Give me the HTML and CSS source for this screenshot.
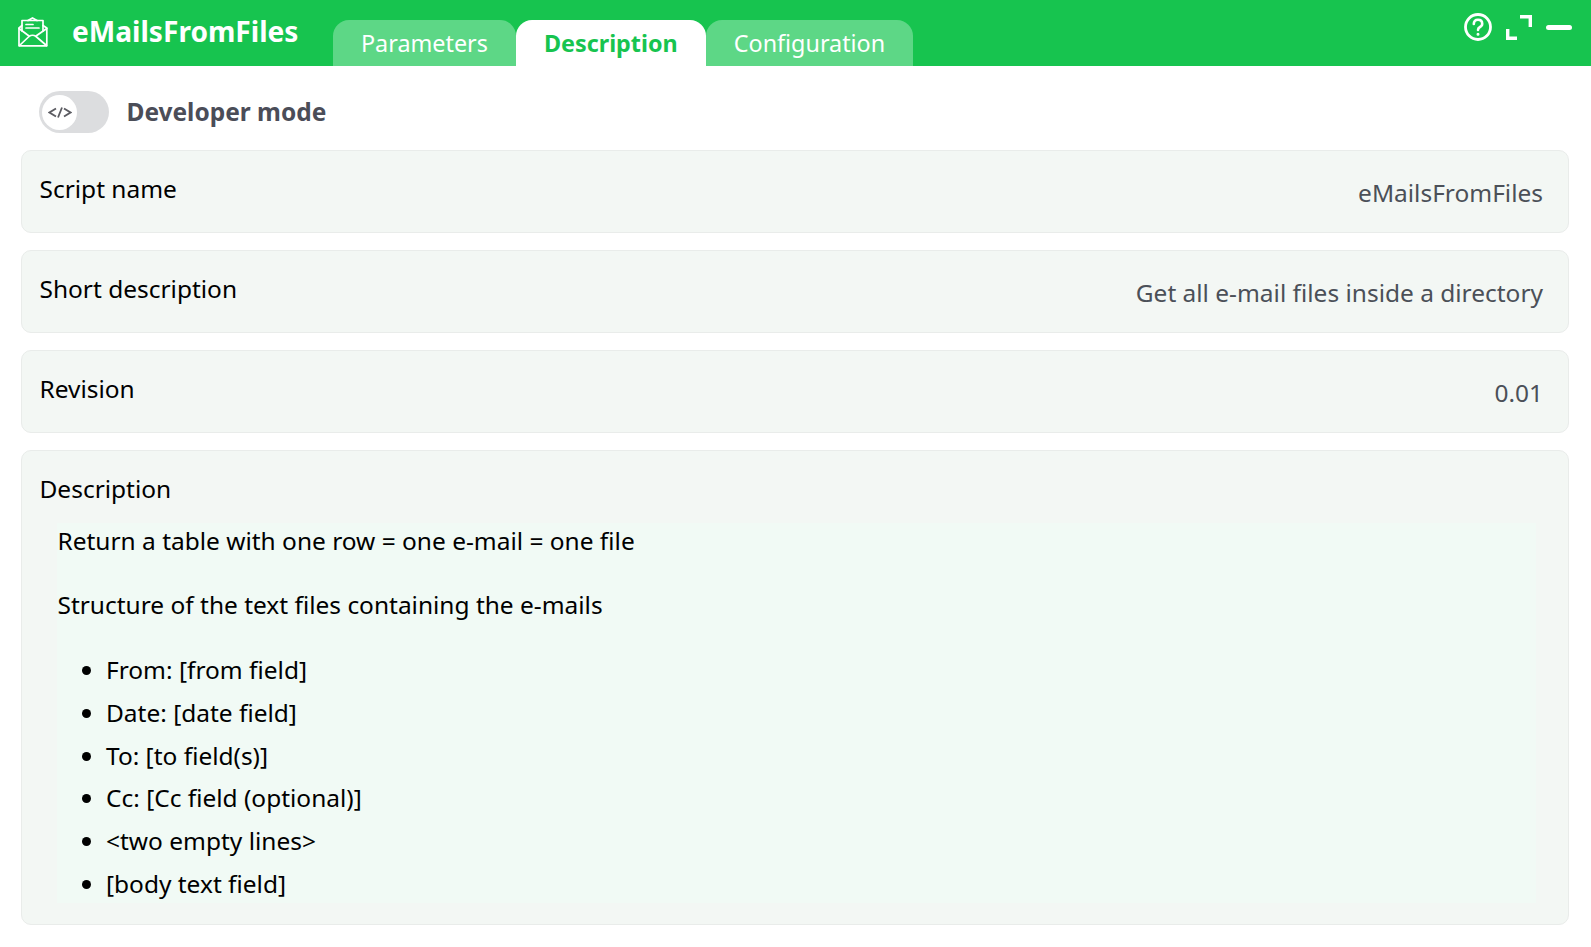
FILE: index.html
```html
<!DOCTYPE html>
<html lang="en">
<head>
    <meta charset="UTF-8">
    <title>eMailsFromFiles</title>
    <link rel="stylesheet" href="styles.css">
</head>
<body>
    <header class="topbar">
        <svg class="logo" viewBox="0 0 30 30" fill="none" stroke="#fff" stroke-width="1.7" stroke-linejoin="round" stroke-linecap="round">
            <path d="M10 3.5 L14.5 0.9 L19 3.5"/>
            <path d="M4 14 V3.5 H25 V14"/>
            <path d="M4 8.5 L1 11 V28.8 H28.8 V11 L25 8.5"/>
            <path d="M1 11.5 L11 19 M28.8 11.5 L18 19"/>
            <path d="M1.5 28.5 L11 19.5 Q14.5 17 18 19.5 L28.5 28.5"/>
            <path d="M8 7.5 H15 M8 11 H21"/>
        </svg>
        <div class="app-name">eMailsFromFiles</div>
        <nav class="tabs">
            <div class="tab">Parameters</div>
            <div class="tab active">Description</div>
            <div class="tab">Configuration</div>
        </nav>
        <div class="actions">
            <svg class="icon-help" viewBox="0 0 28 28" fill="none" stroke="#fff" stroke-width="2.8" stroke-linecap="round">
                <circle cx="14" cy="14" r="12.5"/>
                <path d="M9.8 11 Q9.8 6.8 14 6.8 Q18.2 6.8 18.2 10.8 Q18.2 13 16 14 Q14 15 14 17" stroke-width="2.6"/>
                <circle cx="14" cy="21.2" r="0.9" fill="#fff" stroke-width="1.2"/>
            </svg>
            <svg class="icon-expand" viewBox="0 0 26 25" fill="none" stroke="#fff" stroke-width="3.4">
                <path d="M14 1.7 H24.3 V12"/>
                <path d="M1.7 14 V23.3 H11"/>
            </svg>
            <div class="icon-minimize"></div>
        </div>
    </header>
    <main class="content">
        <div class="dev-mode">
            <div class="switch">
                <div class="knob">
                    <svg class="code-icon" viewBox="0 0 24 11" fill="none" stroke="#5c5c62" stroke-width="1.8">
                        <path d="M8 1.5 L1.5 5.5 L8 9.5"/>
                        <path d="M14 0.5 L10 10.5"/>
                        <path d="M16 1.5 L22.5 5.5 L16 9.5"/>
                    </svg>
                </div>
            </div>
            <span class="dev-label">Developer mode</span>
        </div>
        <section class="card row">
            <div class="card-label">Script name</div>
            <div class="card-value">eMailsFromFiles</div>
        </section>
        <section class="card row">
            <div class="card-label">Short description</div>
            <div class="card-value">Get all e-mail files inside a directory</div>
        </section>
        <section class="card row">
            <div class="card-label">Revision</div>
            <div class="card-value">0.01</div>
        </section>
        <section class="card last">
            <div class="card-label">Description</div>
            <div class="doc">
                <p>Return a table with one row = one e-mail = one file</p>
                <p>Structure of the text files containing the e-mails</p>
                <ul>
                    <li>From: [from field]</li>
                    <li>Date: [date field]</li>
                    <li>To: [to field(s)]</li>
                    <li>Cc: [Cc field (optional)]</li>
                    <li>&lt;two empty lines&gt;</li>
                    <li>[body text field]</li>
                </ul>
            </div>
        </section>
    </main>
</body>
</html>
```

FILE: styles.css
```css
* {
    box-sizing: border-box;
}
body {
    margin: 0;
    font-family: "Noto Sans", sans-serif;
    font-size: 24.48px;
    background-color: #fff;
    color: #000;
}
.topbar {
    display: flex;
    align-items: flex-start;
    height: 66px;
    background-color: #17c44f;
    color: #fff;
}
.logo {
    width: 30px;
    height: 30px;
    margin: 17px 0 0 18px;
}
.app-name {
    margin: 10px 0 0 24px;
    width: 261px;
    font-size: 28.1px;
    font-weight: 700;
    line-height: 42px;
}
.tabs {
    display: flex;
    margin-top: 20px;
}
.tab {
    height: 46px;
    padding: 0 28px;
    line-height: 46px;
    font-size: 23.35px;
    color: #fff;
    background-color: #5dd786;
    border-radius: 16px 16px 0 0;
}
.tab.active {
    font-weight: 700;
    color: #17c44f;
    background-color: #fff;
}
.actions {
    display: flex;
    align-items: flex-start;
    margin-left: auto;
}
.icon-help {
    width: 28px;
    height: 28px;
    margin-top: 13px;
}
.icon-expand {
    width: 26px;
    height: 25px;
    margin: 15px 0 0 14px;
}
.icon-minimize {
    width: 26px;
    height: 5px;
    margin: 24.5px 19px 0 14px;
    background-color: #fff;
    border-radius: 3px;
}
.content {
    padding: 0 22px 0 21px;
}
.dev-mode {
    display: flex;
    align-items: center;
    height: 84px;
    padding: 8px 0 0 18px;
}
.switch {
    width: 70px;
    height: 42px;
    padding: 3px;
    background-color: #dcdddf;
    border-radius: 21px;
}
.knob {
    display: flex;
    align-items: center;
    justify-content: center;
    width: 35px;
    height: 35px;
    margin-top: 1px;
    background-color: #fff;
    border-radius: 50%;
}
.code-icon {
    width: 24px;
    height: 11px;
}
.dev-label {
    margin: -2px 0 0 17.5px;
    font-weight: 700;
    color: #4b4d58;
}
.card {
    margin-bottom: 17px;
    padding: 18px 18px 18px 17.5px;
    background-color: #f3f7f4;
    border: 1px solid #e9ecea;
    border-radius: 10px;
}
.row {
    display: flex;
    justify-content: space-between;
    height: 83px;
}
.last {
    padding-bottom: 21px;
}
.card-label {
    line-height: 39px;
}
.card-value {
    margin: 4px 7px 0 0;
    line-height: 39px;
    color: #4b5058;
}
.doc {
    margin: 15px 14px 0 17.5px;
    padding-left: 0.5px;
    height: 380px;
    background-color: #f1faf5;
}
.doc p {
    margin: 0;
    line-height: 36.72px;
}
.doc p + p {
    margin: 27px 0 25.4px;
}
.doc ul {
    margin: 0;
    padding-left: 48.5px;
}
.doc li {
    line-height: 42.84px;
}
```
